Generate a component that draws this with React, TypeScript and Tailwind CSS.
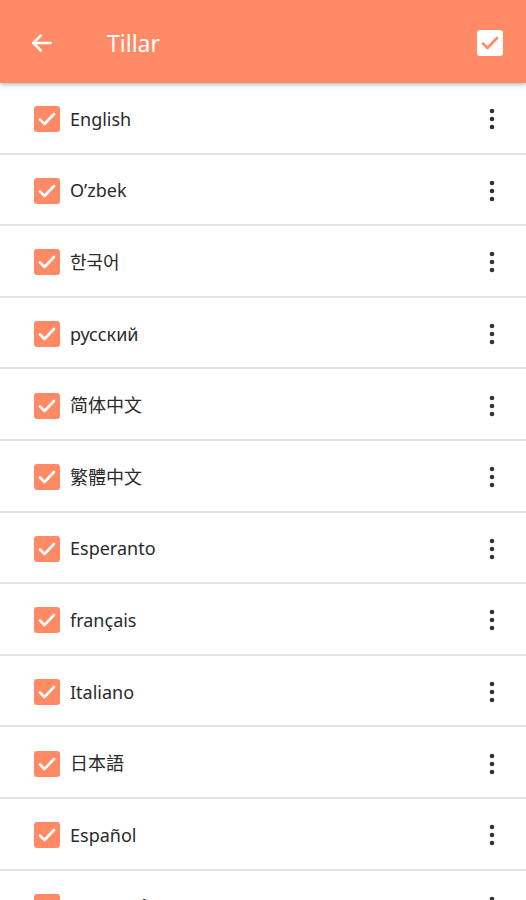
import React from 'react';

const languages = [
  'English',
  'O’zbek',
  '한국어',
  'русский',
  '简体中文',
  '繁體中文',
  'Esperanto',
  'français',
  'Italiano',
  '日本語',
  'Español',
  'Português',
];

function CheckBox({ inverted }: { inverted?: boolean }) {
  return (
    <div
      className={
        'flex h-[26px] w-[26px] items-center justify-center rounded-[3px] ' +
        (inverted ? 'bg-white' : 'bg-[#ff8a65]')
      }
    >
      <svg viewBox="0 0 24 24" className="h-[24px] w-[24px]" fill="none">
        <path
          d="M5 12.5l4.5 4.5L19 7"
          stroke={inverted ? '#ff8a65' : '#ffffff'}
          strokeWidth="2.6"
          strokeLinecap="round"
          strokeLinejoin="round"
        />
      </svg>
    </div>
  );
}

function App() {
  return (
    <div
      className="h-[900px] overflow-hidden bg-white"
      style={{ fontFamily: '"Noto Sans", "Noto Sans CJK SC", sans-serif' }}
    >
      {/* Header */}
      <header className="relative z-10 flex h-[83px] items-center bg-[#ff8a65] pl-[29px] pr-[23px] shadow-[0_2px_4px_rgba(0,0,0,0.25)]">
        <svg viewBox="0 0 24 24" className="mt-[2px] h-[26px] w-[26px]" fill="none">
          <path
            d="M20 12H4M11 5l-7 7 7 7"
            stroke="#ffffff"
            strokeWidth="2.4"
            strokeLinecap="round"
            strokeLinejoin="round"
          />
        </svg>
        <h1 className="ml-[52px] mt-[4px] text-[23px] text-white">Tillar</h1>
        <div className="ml-auto mt-[3px]">
          <CheckBox inverted />
        </div>
      </header>

      {/* Language list */}
      <ul>
        {languages.map((lang) => (
          <li
            key={lang}
            className="flex h-[71.6px] items-center border-b-2 border-[#e3e3e3] pl-[34px] pr-[30px] pt-[3px]"
          >
            <CheckBox />
            <span className="ml-[10px] text-[18px] text-[#2a2a2a]">{lang}</span>
            <svg viewBox="0 0 8 24" className="ml-auto h-[24px] w-[8px]">
              <circle cx="4" cy="4" r="2.3" fill="#333" />
              <circle cx="4" cy="12" r="2.3" fill="#333" />
              <circle cx="4" cy="20" r="2.3" fill="#333" />
            </svg>
          </li>
        ))}
      </ul>
    </div>
  );
}

export default App;
